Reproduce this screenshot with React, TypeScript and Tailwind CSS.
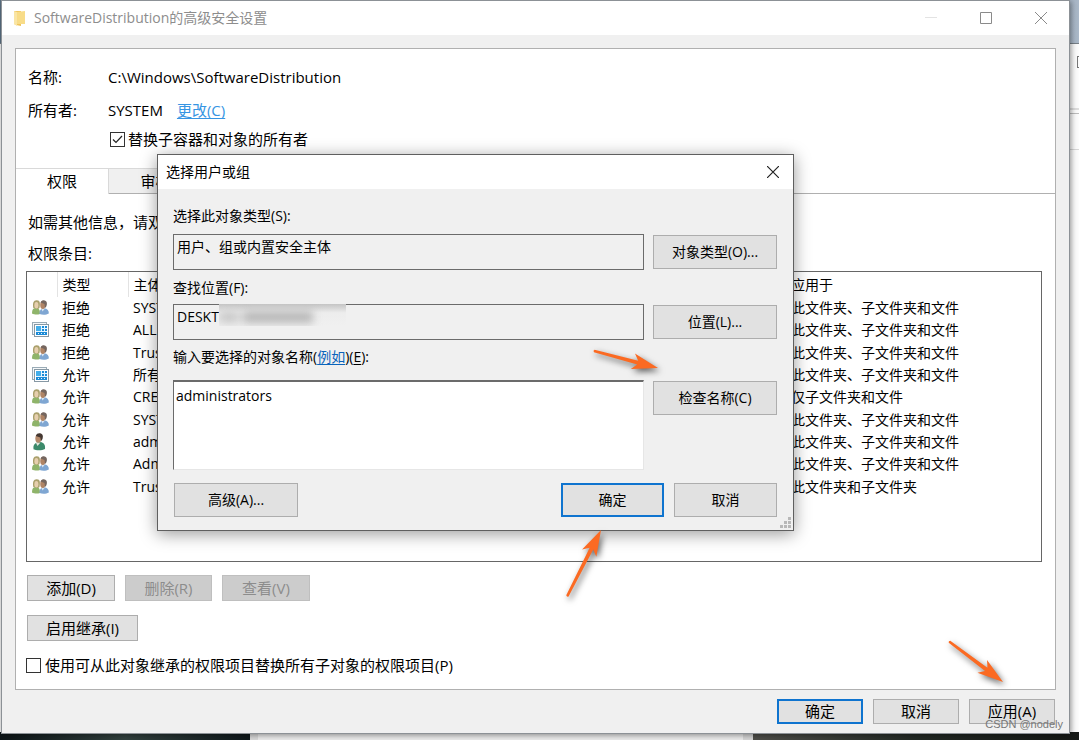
import type { ReactNode } from "react";

type IconKind = "group" | "package" | "user";

const entries: { icon: IconKind; type: string; principal: string; scope: string }[] = [
  { icon: "group", type: "拒绝", principal: "SYSTEM", scope: "此文件夹、子文件夹和文件" },
  { icon: "package", type: "拒绝", principal: "ALL", scope: "此文件夹、子文件夹和文件" },
  { icon: "group", type: "拒绝", principal: "Trust", scope: "此文件夹、子文件夹和文件" },
  { icon: "package", type: "允许", principal: "所有", scope: "此文件夹、子文件夹和文件" },
  { icon: "group", type: "允许", principal: "CREA", scope: "仅子文件夹和文件" },
  { icon: "group", type: "允许", principal: "SYSTEM", scope: "此文件夹、子文件夹和文件" },
  { icon: "user", type: "允许", principal: "admi", scope: "此文件夹、子文件夹和文件" },
  { icon: "group", type: "允许", principal: "Adm", scope: "此文件夹、子文件夹和文件" },
  { icon: "group", type: "允许", principal: "Trust", scope: "此文件夹和子文件夹" },
];

function EntryIcon({ kind }: { kind: IconKind }) {
  if (kind === "package") {
    return (
      <svg width="18" height="16" viewBox="0 0 18 16" className="block" aria-hidden="true">
        <rect x="0.5" y="0.5" width="14" height="12" fill="#f4f7f9" stroke="#9aabb6" />
        <path d="M2 2h11v1H3v8H2z" fill="#5aaee0" />
        <rect x="2.500" y="2.500" width="14" height="12" fill="#fff" stroke="#8798a4" />
        <rect x="4" y="4" width="11" height="9" fill="#1c8bd6" />
        <rect x="4" y="4" width="5" height="5" fill="#43aeea" />
        <path d="M9 4h1v5H9zM12 4h1v5h-1zM10 6h5v1h-5zM4 9h11v1H4zM6 11h1v1H6zM9 11h1v1H9zM12 11h1v1h-1z" fill="#e6f5ff" />
      </svg>
    );
  }
  if (kind === "user") {
    return (
      <svg width="18" height="18" viewBox="0 0 18 18" className="block" aria-hidden="true">
        <path d="M1.500 16C1 13 2 10.500 5 9.500l4-.5c3 1 4.500 3 4 7-3 1.700-9 1.700-12 0z" fill="#3c8a6b" />
        <path d="M4 10l1.500 3L8.500 9.500z" fill="#e3e6dc" />
        <ellipse cx="6.300" cy="5.600" rx="3" ry="4.200" fill="#b58a6c" />
        <path d="M3.800 3C4.500.5 6.500 0 8 .3 10.800.8 11.500 3 10.500 6L9 8.300 8.300 4.500z" fill="#453832" />
      </svg>
    );
  }
  return (
    <svg width="18" height="16" viewBox="0 0 18 16" className="block" aria-hidden="true">
      <path d="M0 13C0 9.500 1.500 8 4 7.800 7 8 8 10 8 14 5 15 2 14.500 0 13.500z" fill="#8fb46a" />
      <path d="M1.300 8C.5 3 1.500.5 4.500.3 8 0 8.500 3 7.500 8L6 9z" fill="#aaa06c" />
      <ellipse cx="4.400" cy="5.200" rx="2" ry="3.200" fill="#e6cfae" />
      <path d="M7.500 14C7.500 10 9 8.500 12 8.200 15.500 8.500 17 10.500 16.800 13.500 14 15.200 10 15 7.500 14z" fill="#7fa6d2" />
      <path d="M9.500 9l1 2.500 2.500-3z" fill="#d9e5f2" />
      <ellipse cx="10.800" cy="5" rx="2.600" ry="4" fill="#b08465" />
      <path d="M8.600 2.500C9.500.5 11 .2 12.500.4 15 .8 15.500 3.500 14.300 6.500L13 8l-.5-4z" fill="#75665f" />
    </svg>
  );
}

function Arrow({ className, angle, length }: { className: string; angle: number; length: number }) {
  const rad = (angle * Math.PI) / 180;
  const startX = 80 - length * Math.cos(rad);
  const startY = 80 - length * Math.sin(rad);
  return (
    <svg
      width="100"
      height="100"
      viewBox="0 0 100 100"
      aria-hidden="true"
      className={`pointer-events-none absolute overflow-visible ${className}`}
    >
      <g transform={`translate(${startX} ${startY}) rotate(${angle})`} fill="#fb6a22">
        <path d={`M0-1.300Q-1.500 0 0 1.300L${length - 21} 2 ${length - 26} 8 ${length} 0 ${length - 26}-8 ${length - 21}-2z`} />
      </g>
    </svg>
  );
}

function PushButton({
  children,
  className,
  primary,
  disabled,
}: {
  children: ReactNode;
  className: string;
  primary?: boolean;
  disabled?: boolean;
}) {
  const look = disabled
    ? "border border-[#bfbfbf] bg-[#cccccc] text-[#8c8c8c]"
    : primary
      ? "border-2 border-[#0f74cf] bg-[#e1e1e1]"
      : "border border-[#adadad] bg-[#e1e1e1]";
  return (
    <button type="button" disabled={disabled} className={`flex shrink-0 items-center justify-center ${look} ${className}`}>
      {children}
    </button>
  );
}

function Backdrop() {
  return (
    <div className="absolute inset-0 flex flex-col bg-[#fcfcfc]" aria-hidden="true">
      <div className="h-11 border-b border-[#777f87] bg-linear-to-r from-[#5d7488] to-[#aab8c8]" />
      <div className="flex flex-1 justify-end">
        <div className="w-[9px]">
          <div className="flex h-[66px] items-start justify-end border-b-2 border-[#dedede] pt-3">
            <div className="h-3 w-[2px] border border-r-0 border-[#777]" />
          </div>
          <div className="h-1 border-b border-[#bdbdbd]" />
          <div className="h-9 border-b border-[#d8d8d8]" />
        </div>
      </div>
      <div className="flex h-2">
        <div className="w-[250px] bg-linear-to-r from-[#0c1417] via-[#33423f] to-[#10191c]" />
        <div className="w-2 bg-[#d9d9d9]" />
        <div className="flex-1 bg-[#ececec]" />
        <div className="w-[10px] bg-[#d6d6d6]" />
        <div className="w-[326px] bg-linear-to-r from-[#50504b] via-[#232a25] to-[#151815]" />
      </div>
    </div>
  );
}

function SecurityWindow() {
  return (
    <div className="relative mr-[9px] mb-[6px] ml-px flex flex-1 flex-col border border-[#8c9196] bg-[#f0f0f0] shadow-[1px_1px_6px_rgba(0,0,0,0.45)]">
      <header className="flex h-[34px] items-center bg-white text-[14px] leading-5 text-[#8d8d8d]">
        <svg width="13" height="17" viewBox="0 0 13 17" className="ml-3 shrink-0" aria-hidden="true">
          <path d="M0 1h7v15l-5-1-2-1z" fill="#efc45b" />
          <path d="M3 2l8-1v13H3z" fill="#f8dc88" />
          <path d="M0 1l3 1v14l-3-2z" fill="#fae5a4" />
        </svg>
        <h1 className="ml-[7px] flex-1">SoftwareDistribution的高级安全设置</h1>
        <button type="button" aria-label="最小化" className="flex h-full w-[55px] items-center justify-center">
          <svg width="12" height="12" aria-hidden="true"><path d="M0 5.500h12" stroke="#e3e3e3" /></svg>
        </button>
        <button type="button" aria-label="最大化" className="flex h-full w-[55px] items-center justify-center">
          <svg width="12" height="12" aria-hidden="true"><path d="M.5.5h11v11H.5z" fill="none" stroke="#8a8a8a" /></svg>
        </button>
        <button type="button" aria-label="关闭" className="flex h-full w-14 items-center justify-center">
          <svg width="12" height="12" aria-hidden="true"><path d="M0 0l12 12M12 0L0 12" stroke="#8a8a8a" /></svg>
        </button>
      </header>

      <main className="mx-[13px] mt-[13px] flex flex-1 flex-col border border-[#b0b0b0] bg-white">
        <div className="flex flex-col pt-[18px] pl-3 leading-5">
          <div className="flex">
            <span className="w-20">名称:</span>
            <span>C:\Windows\SoftwareDistribution</span>
          </div>
          <div className="mt-[13px] flex">
            <span className="w-20">所有者:</span>
            <span>SYSTEM</span>
            <a href="#owner" className="ml-[14px] text-[#3695e3] underline underline-offset-2">更改(C)</a>
          </div>
          <label className="mt-[9px] ml-[82px] flex items-center gap-[3px]">
            <span className="relative flex size-[15px]">
              <input type="checkbox" defaultChecked className="peer size-[15px] appearance-none border border-[#333] bg-white" />
              <svg viewBox="0 0 15 15" className="pointer-events-none absolute inset-0 hidden peer-checked:block" aria-hidden="true">
                <path d="M3 7.500l3 3 6-6.500" fill="none" stroke="#222" strokeWidth="1.200" />
              </svg>
            </span>
            替换子容器和对象的所有者
          </label>
        </div>

        <div className="mt-[19px] flex h-[26px] leading-5" role="tablist">
          <button type="button" role="tab" aria-selected="true" className="w-[93px] border-t border-r border-[#d9d9d9] pb-px">
            权限
          </button>
          <button type="button" role="tab" aria-selected="false" className="w-[94px] border-t border-r border-b border-[#d9d9d9] border-b-[#b0b0b0] bg-[#f0f0f0]">
            审核
          </button>
          <div className="flex-1 border-b border-[#b0b0b0]" />
        </div>

        <div className="flex flex-1 flex-col pt-[18px] pr-[13px] pl-[10px] leading-5">
          <p className="ml-[2px]">如需其他信息，请双击</p>
          <p className="mt-[11px] ml-[2px]">权限条目:</p>
          <div className="mt-2 flex-1 border border-[#666]">
            <table className="w-full table-fixed border-collapse text-left text-[14px] leading-5">
              <thead>
                <tr className="h-[25px]">
                  <th aria-label="图标" className="w-[30px] border-r border-[#e3e3e3] p-0" />
                  <th className="w-[71px] border-r border-[#e3e3e3] p-0 pl-[5px] font-normal">类型</th>
                  <th className="w-[658px] p-0 pl-[5px] font-normal">主体</th>
                  <th className="p-0 pl-[5px] font-normal">应用于</th>
                </tr>
              </thead>
            </table>
            <table className="h-[201px] w-full table-fixed border-collapse text-left text-[14px] leading-5">
              <tbody>
                {entries.map((e, i) => (
                  <tr key={i}>
                    <td className="w-[30px] p-0 pl-[5px]"><EntryIcon kind={e.icon} /></td>
                    <td className="w-[71px] p-0 pl-[5px]">{e.type}</td>
                    <td className="w-[658px] p-0 pl-[5px]">{e.principal}</td>
                    <td className="p-0 pl-[5px]">{e.scope}</td>
                  </tr>
                ))}
              </tbody>
            </table>
          </div>
          <div className="mt-[13px] flex gap-[10px] pl-px">
            <PushButton className="h-[26px] w-[88px]">添加(D)</PushButton>
            <PushButton className="h-[26px] w-[87px]" disabled>删除(R)</PushButton>
            <PushButton className="h-[26px] w-[88px]" disabled>查看(V)</PushButton>
          </div>
          <div className="mt-[14px] flex pl-px">
            <PushButton className="h-[26px] w-[111px]">启用继承(I)</PushButton>
          </div>
          <label className="mt-[14px] mb-[14px] flex items-center gap-1">
            <input type="checkbox" className="size-[15px] appearance-none border border-[#333] bg-white" />
            使用可从此对象继承的权限项目替换所有子对象的权限项目(P)
          </label>
        </div>
      </main>

      <footer className="flex justify-end gap-[10px] px-[14px] pt-[9px] pb-[9px]">
        <PushButton className="h-[25px] w-[86px]" primary>确定</PushButton>
        <PushButton className="h-[25px] w-[86px]">取消</PushButton>
        <PushButton className="h-[25px] w-[86px]">应用(A)</PushButton>
      </footer>
    </div>
  );
}

function SelectDialog() {
  const gripDots = [[8, 0], [4, 4], [8, 4], [0, 8], [4, 8], [8, 8]];
  return (
    <section
      role="dialog"
      aria-labelledby="dialog-title"
      className="absolute top-[154px] left-[157px] w-[637px] border border-[#5f5f5f] bg-[#f0f0f0] text-[14px] leading-5 shadow-[0_3px_16px_rgba(0,0,0,0.4)]"
    >
      <header className="flex h-[34px] items-center justify-between bg-white pl-2">
        <h2 id="dialog-title">选择用户或组</h2>
        <button type="button" aria-label="关闭" className="flex h-full w-10 items-center justify-center">
          <svg width="12" height="12" aria-hidden="true"><path d="M0 0l12 12M12 0L0 12" stroke="#222" strokeWidth="1.200" /></svg>
        </button>
      </header>
      <form className="pt-[17px] pr-4 pb-[13px] pl-[15px]">
        <label htmlFor="object-type" className="block">选择此对象类型(S):</label>
        <div className="mt-2 flex items-center gap-[9px]">
          <input
            id="object-type"
            readOnly
            defaultValue="用户、组或内置安全主体"
            className="h-9 min-w-0 flex-1 border border-[#6b6b6b] bg-[#f0f0f0] pb-3 pl-[3px] outline-none"
          />
          <PushButton className="h-[34px] w-[124px]">对象类型(O)...</PushButton>
        </div>
        <label htmlFor="location" className="mt-2 block">查找位置(F):</label>
        <div className="mt-[6px] flex items-center gap-[9px]">
          <div className="relative flex min-w-0 flex-1">
            <input
              id="location"
              readOnly
              defaultValue="DESKT"
              className="h-9 min-w-0 flex-1 border border-[#6b6b6b] bg-[#f0f0f0] pb-3 pl-[3px] outline-none"
            />
            <div className="absolute top-0 left-[46px] h-[22px] w-[127px] overflow-hidden bg-linear-to-b from-[#c4c4c4] via-[#ededed] via-40% to-[#f0f0f0]" aria-hidden="true">
              <div className="mt-[7px] flex gap-1 blur-xs">
                <div className="h-3 w-5 bg-[#cacaca]" />
                <div className="h-3 w-[70px] bg-[#b8b8b8]" />
              </div>
            </div>
          </div>
          <PushButton className="h-[34px] w-[124px]">位置(L)...</PushButton>
        </div>
        <div className="mt-[7px]">
          <label htmlFor="object-names">输入要选择的对象名称(</label>
          <a href="#examples" className="text-[#0a64bb] underline underline-offset-2">例如</a>
          <label htmlFor="object-names">)(<span className="underline underline-offset-2">E</span>):</label>
        </div>
        <div className="mt-[13px] flex items-start gap-[9px]">
          <textarea
            id="object-names"
            defaultValue="administrators"
            className="h-[90px] min-w-0 flex-1 resize-none border border-t-2 border-[#e6e6e6] border-t-[#6b6b6b] border-l-[#6b6b6b] bg-white pt-1 pl-[2px] outline-none"
          />
          <PushButton className="mt-px h-[34px] w-[124px]">检查名称(C)</PushButton>
        </div>
        <div className="mt-[13px] flex gap-[10px] pl-px">
          <PushButton className="h-[34px] w-[124px]">高级(A)...</PushButton>
          <div className="flex-1" />
          <PushButton className="h-[34px] w-[103px]" primary>确定</PushButton>
          <PushButton className="h-[34px] w-[103px]">取消</PushButton>
        </div>
      </form>
      <svg width="11" height="11" className="absolute right-[2px] bottom-[2px]" aria-hidden="true">
        {gripDots.map(([x, y]) => (
          <rect key={`${x}-${y}`} x={x} y={y} width="3" height="3" fill="#b8b8b8" />
        ))}
      </svg>
    </section>
  );
}

export default function App() {
  return (
    <div className="relative flex min-h-screen flex-col overflow-hidden font-['Open_Sans','Noto_Sans_CJK_SC',sans-serif] text-[15px] text-black">
      <Backdrop />
      <SecurityWindow />
      <SelectDialog />
      <Arrow className="top-[288px] left-[578px] drop-shadow-[2px_3px_3px_rgba(0,0,0,0.6)]" angle={15} length={66} />
      <Arrow className="top-[450px] left-[521px] drop-shadow-[2px_3px_3px_rgba(0,0,0,0.6)]" angle={-63} length={74} />
      <Arrow className="top-[602px] left-[923px] drop-shadow-[2px_3px_3px_rgba(0,0,0,0.6)]" angle={37} length={67} />
      <span className="absolute right-4 bottom-2 font-['Liberation_Sans',sans-serif] text-[11px] leading-4 text-[#777]">CSDN @nodely</span>
    </div>
  );
}
